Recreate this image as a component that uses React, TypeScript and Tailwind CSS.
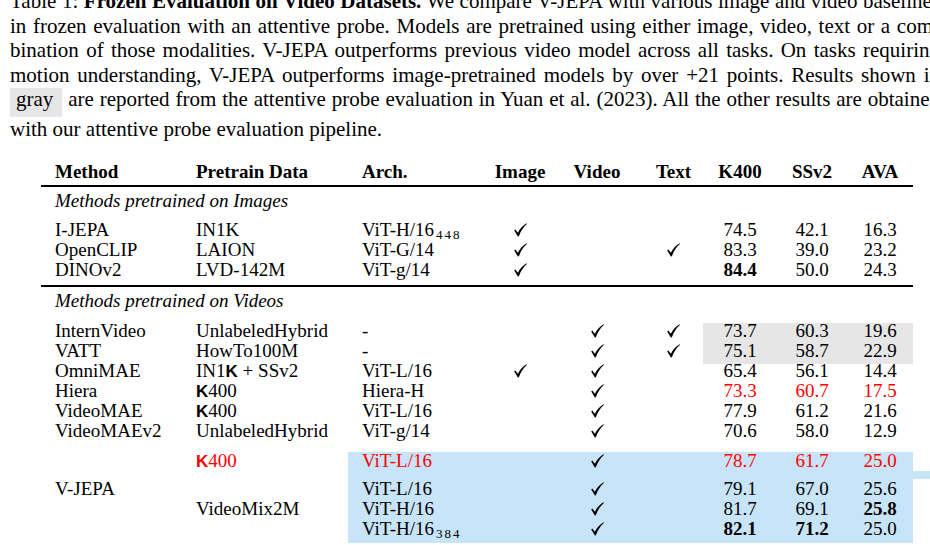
import React from "react";

const G =
  "grid grid-cols-[155px_152px_142px_60px_94px_59px_74px_70px_66px] h-[20px] leading-[20px]";

function Check() {
  return (
    <svg width="13" height="14" viewBox="0 0 13 14" className="mx-auto mt-[3px] block">
      <path
        d="M0.2 7.4 L1.3 6.5 L3.9 9.7 C5.7 5.9 8.6 2.6 12.5 0.3 L12.9 0.9 C9.6 3.7 6.7 7.7 4.9 13.3 L3.9 13.5 Z"
        fill="black"
      />
    </svg>
  );
}

function K() {
  return <span className="font-['Liberation_Sans',sans-serif] font-bold text-[17px]">K</span>;
}

function Sub({ t }: { t: string }) {
  return <span className="text-[13px] leading-none align-[-3px] tracking-[2px] ml-[2px]">{t}</span>;
}

type Cells = React.ReactNode[];

function Row({ cells, from, bg }: { cells: Cells; from?: number; bg?: string }) {
  return (
    <div className={G}>
      {cells.map((c, i) => {
        const align = i === 0 ? "pl-[14px]" : i === 1 ? "" : i === 2 ? "pl-[14px]" : "text-center";
        const b = from !== undefined && i >= from ? bg : "";
        return (
          <div key={i} className={`${align} ${b ?? ""} whitespace-nowrap`}>
            {c}
          </div>
        );
      })}
    </div>
  );
}

const C = <Check />;
const red = (s: React.ReactNode) => <span className="text-[#ff0000]">{s}</span>;
const b = (s: string) => <span className="font-bold">{s}</span>;

export default function App() {
  return (
    <div className="w-[930px] h-[545px] overflow-hidden bg-white text-black font-['Liberation_Serif',serif]">
      <div className="-mt-[11px] pl-[10px] text-[21px] leading-[24.5px]">
        <div className="w-[930px] whitespace-nowrap text-justify [text-align-last:justify]">
          Table 1: <span className="font-bold">Frozen Evaluation on Video Datasets.</span> We compare V-JEPA with various image and video baselines
        </div>
        <div className="w-[930px] whitespace-nowrap text-justify [text-align-last:justify]">
          in frozen evaluation with an attentive probe. Models are pretrained using either image, video, text or a com-
        </div>
        <div className="w-[930px] whitespace-nowrap text-justify [text-align-last:justify]">
          bination of those modalities. V-JEPA outperforms previous video model across all tasks. On tasks requiring
        </div>
        <div className="w-[930px] whitespace-nowrap text-justify [text-align-last:justify]">
          motion understanding, V-JEPA outperforms image-pretrained models by over +21 points. Results shown in
        </div>
        <div className="w-[930px] whitespace-nowrap text-justify [text-align-last:justify]">
          <span className="inline-block bg-[#e6e6e6] leading-[23px] pb-[6px] pl-[6px] pr-[9px]">gray</span> are reported from the attentive probe evaluation in Yuan et al. (2023). All the other results are obtained
        </div>
        <div className="whitespace-nowrap">with our attentive probe evaluation pipeline.</div>
      </div>

      <div className="ml-[41px] mt-[20px] w-[872px] text-[19px] flex flex-col">
        <Row
          cells={[b("Method"), b("Pretrain Data"), b("Arch."), b("Image"), b("Video"), b("Text"), b("K400"), b("SSv2"), b("AVA")]}
        />
        <div className="mt-[3px] h-[2px] bg-black" />
        <div className="mt-[4px] h-[20px] leading-[20px] pl-[14px] italic">Methods pretrained on Images</div>
        <div className="mt-[9px]">
          <Row cells={["I-JEPA", "IN1K", <>ViT-H/16<Sub t="448" /></>, C, null, null, "74.5", "42.1", "16.3"]} />
          <Row cells={["OpenCLIP", "LAION", "ViT-G/14", C, null, C, "83.3", "39.0", "23.2"]} />
          <Row cells={["DINOv2", "LVD-142M", "ViT-g/14", C, null, null, b("84.4"), "50.0", "24.3"]} />
        </div>
        <div className="mt-[5px] h-[2px] bg-black" />
        <div className="mt-[4px] h-[20px] leading-[20px] pl-[14px] italic">Methods pretrained on Videos</div>
        <div className="mt-[10px]">
          <Row
            cells={["InternVideo", "UnlabeledHybrid", "-", null, C, C, "73.7", "60.3", "19.6"]}
            from={6}
            bg="bg-[linear-gradient(to_bottom,transparent_2px,#e6e6e6_2px)]"
          />
          <Row
            cells={["VATT", "HowTo100M", "-", null, C, C, "75.1", "58.7", "22.9"]}
            from={6}
            bg="bg-[#e6e6e6] shadow-[0_3px_0_0_#e6e6e6]"
          />
          <Row cells={["OmniMAE", <>IN1<K /> + SSv2</>, "ViT-L/16", C, C, null, "65.4", "56.1", "14.4"]} />
          <Row cells={["Hiera", <><K />400</>, "Hiera-H", null, C, null, red("73.3"), red("60.7"), red("17.5")]} />
          <Row cells={["VideoMAE", <><K />400</>, "ViT-L/16", null, C, null, "77.9", "61.2", "21.6"]} />
          <Row cells={["VideoMAEv2", "UnlabeledHybrid", "ViT-g/14", null, C, null, "70.6", "58.0", "12.9"]} />
        </div>
        <div className="mt-[10px]">
          <Row
            cells={[null, red(<><K />400</>), red("ViT-L/16"), null, C, null, red("78.7"), red("61.7"), red("25.0")]}
            from={2}
            bg="bg-[linear-gradient(to_bottom,transparent_1px,#c8e4f8_1px)]"
          />
          <div className="grid grid-cols-[155px_152px_665px] h-[8px]">
            <div />
            <div />
            <div className="bg-[#c8e4f8]" />
          </div>
          <Row
            cells={["V-JEPA", null, "ViT-L/16", null, C, null, "79.1", "67.0", "25.6"]}
            from={2}
            bg="bg-[#c8e4f8]"
          />
          <Row
            cells={[null, "VideoMix2M", "ViT-H/16", null, C, null, "81.7", "69.1", b("25.8")]}
            from={2}
            bg="bg-[#c8e4f8]"
          />
          <Row
            cells={[null, null, <>ViT-H/16<Sub t="384" /></>, null, C, null, b("82.1"), b("71.2"), "25.0"]}
            from={2}
            bg="bg-[#c8e4f8] shadow-[0_3px_0_0_#c8e4f8]"
          />
        </div>
      </div>
    </div>
  );
}
